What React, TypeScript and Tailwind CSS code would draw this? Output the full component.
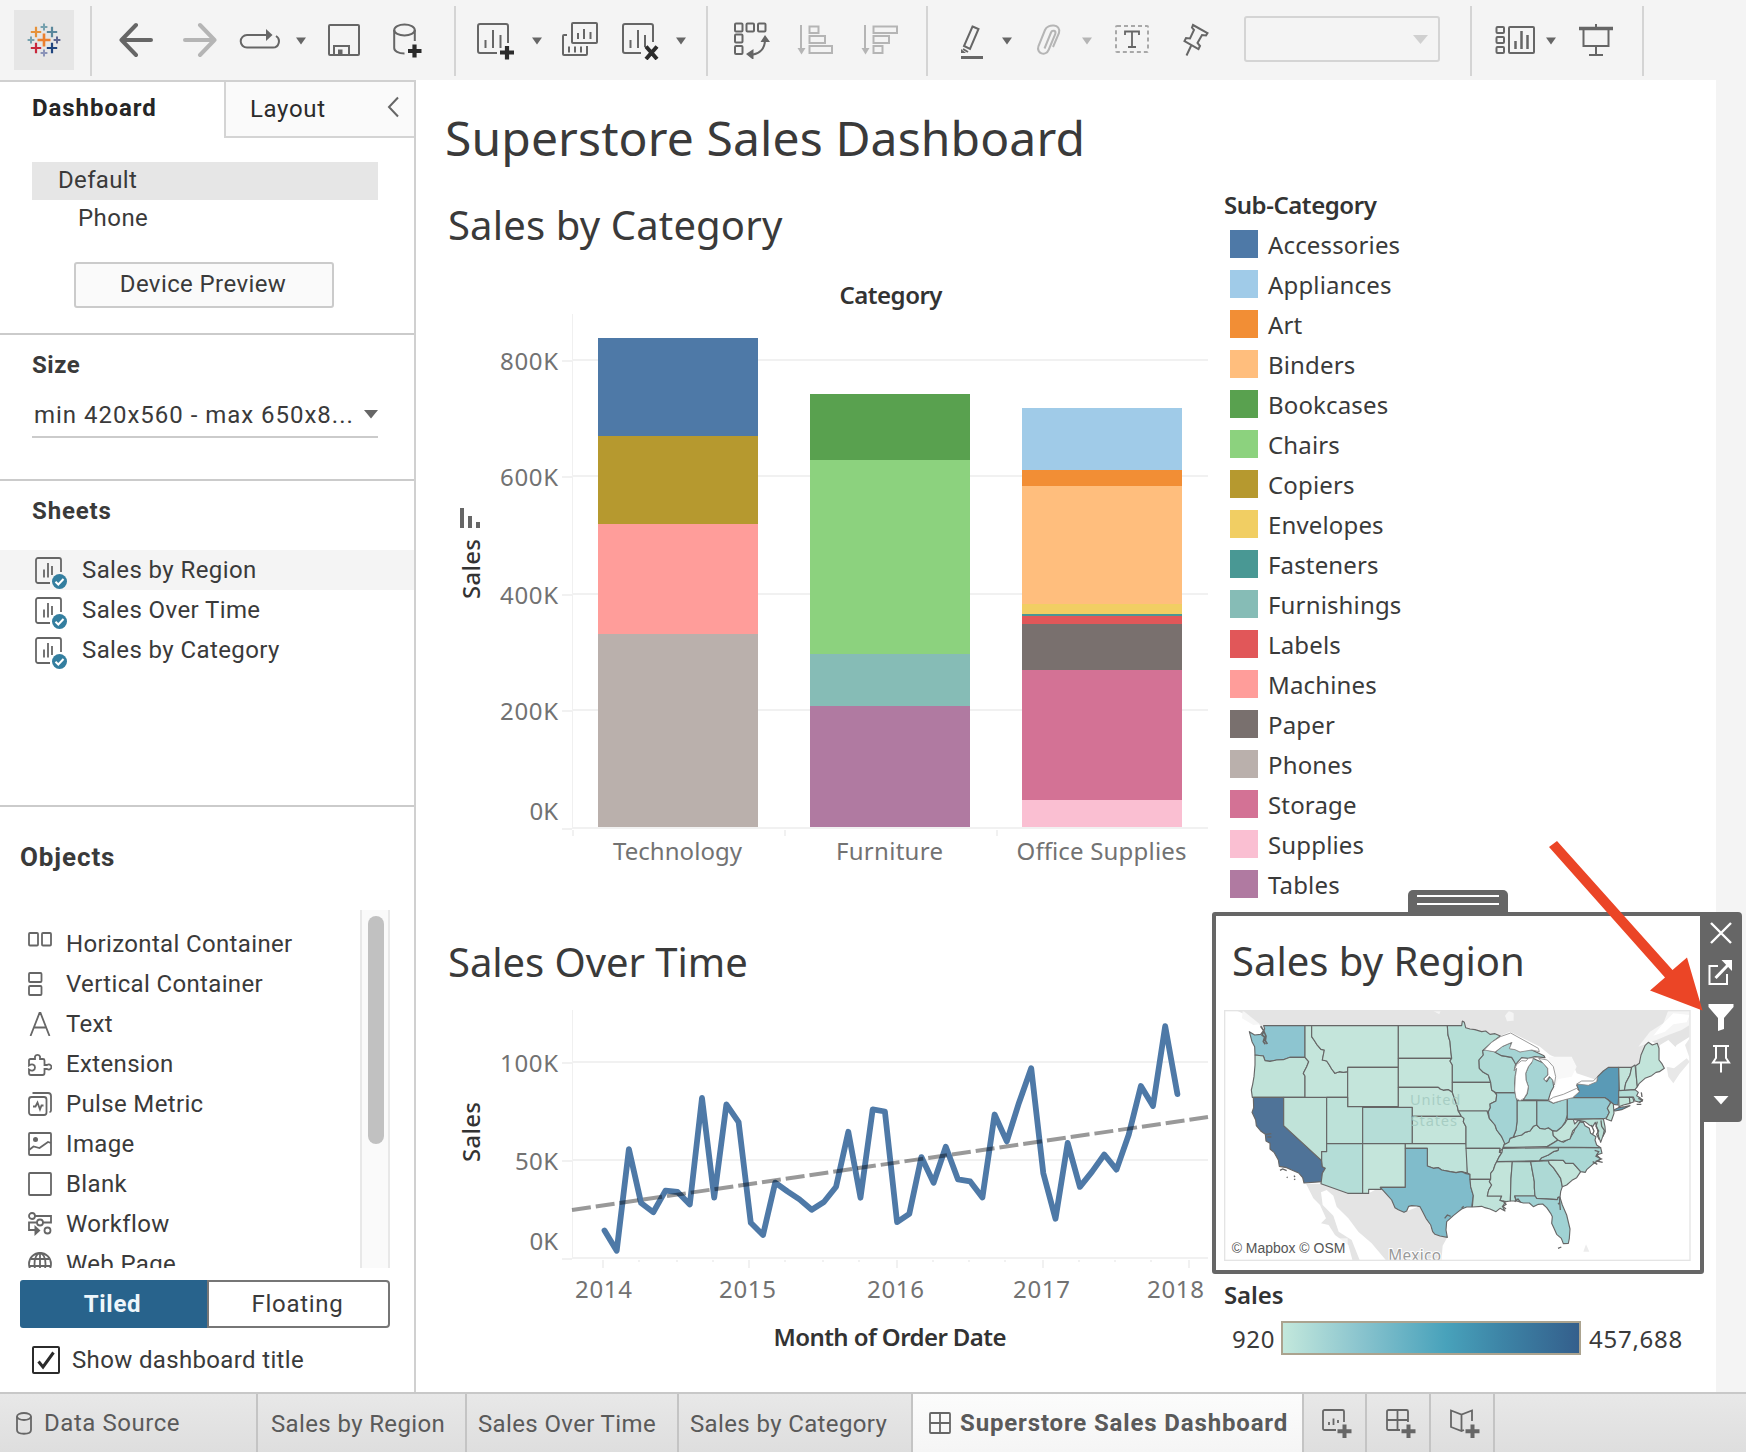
import React from "react";

/* ---------- data ---------- */

const SUBCATEGORIES: [string, string][] = [
  ["Accessories", "#4e79a7"],
  ["Appliances", "#a0cbe8"],
  ["Art", "#f28e35"],
  ["Binders", "#ffbe7d"],
  ["Bookcases", "#59a14f"],
  ["Chairs", "#8cd27e"],
  ["Copiers", "#b6992f"],
  ["Envelopes", "#f1ce63"],
  ["Fasteners", "#499894"],
  ["Furnishings", "#86bcb6"],
  ["Labels", "#e15759"],
  ["Machines", "#ff9d9a"],
  ["Paper", "#79706e"],
  ["Phones", "#bab0ac"],
  ["Storage", "#d37295"],
  ["Supplies", "#fabfd2"],
  ["Tables", "#b07aa1"],
];

type Segment = { y: number; color: string };

const BARS: { x: number; segments: Segment[] }[] = [
  {
    x: 598,
    segments: [
      { y: 338, color: "#4e79a7" },
      { y: 436, color: "#b6992f" },
      { y: 524, color: "#ff9d9a" },
      { y: 634, color: "#bab0ac" },
    ],
  },
  {
    x: 810,
    segments: [
      { y: 394, color: "#59a14f" },
      { y: 460, color: "#8cd27e" },
      { y: 654, color: "#86bcb6" },
      { y: 706, color: "#b07aa1" },
    ],
  },
  {
    x: 1022,
    segments: [
      { y: 408, color: "#a0cbe8" },
      { y: 470, color: "#f28e35" },
      { y: 486, color: "#ffbe7d" },
      { y: 604, color: "#f1ce63" },
      { y: 614, color: "#499894" },
      { y: 616, color: "#e15759" },
      { y: 624, color: "#79706e" },
      { y: 670, color: "#d37295" },
      { y: 800, color: "#fabfd2" },
    ],
  },
];

/* Monthly sales in thousands, January 2014 to December 2017. */
const MONTHLY = [
  14.2, 4.0, 55.7, 28.3, 23.6, 34.6, 33.9, 27.5, 81.8, 31.0, 78.6, 69.5,
  18.2, 12.0, 38.7, 34.2, 30.1, 24.8, 28.8, 36.6, 64.6, 31.0, 76.0, 74.9,
  18.5, 22.8, 51.7, 38.6, 57.0, 40.3, 39.3, 31.1, 73.4, 59.7, 79.4, 97.0,
  43.5, 20.3, 58.9, 36.5, 44.3, 53.0, 45.3, 63.1, 87.9, 77.8, 118.4, 83.8,
];

const linePoints = MONTHLY.map(
  (v, i) => `${(604.5 + i * 12.19).toFixed(1)},${(1258.5 - v * 1.962).toFixed(1)}`,
).join(" ");

const STATES: [string, string][] = [
  ["#8dc5d0", "88,80 104,90 122,88 134,72 131,62 255,62 255,157 210,157 190,164 170,165 150,169 135,167 130,153 105,150 104,125 96,110 92,95"],
  ["#c0e3d9", "105,150 130,153 135,167 150,169 170,165 190,164 210,157 255,157 266,170 260,185 250,205 255,213 255,277 97,277 94,255 98,238 102,215 105,180"],
  ["#4f7398", "100,277 191,277 191,362 305,467 307,485 316,490 307,505 306,530 252,534 248,518 236,504 215,495 200,488 178,484 175,465 162,442 150,432 150,415 138,408 136,388 122,378 109,362 107,345 96,322 101,308"],
  ["#c0e3d9", "191,277 320,277 320,440 305,440 305,467 191,362"],
  ["#c4e5db", "255,62 275,62 275,95 284,108 290,118 303,133 313,135 307,165 320,168 328,180 335,192 345,205 358,200 370,202 383,200 383,277 255,277 255,213 250,205 260,185 266,170 255,157"],
  ["#c4e5db", "275,62 535,62 535,187 383,187 383,200 370,202 358,200 345,205 335,192 328,180 320,168 307,165 313,135 303,133 290,118 284,108 275,95"],
  ["#c4e5db", "383,187 535,187 535,305 383,305"],
  ["#bde2d9", "320,277 383,277 383,305 428,305 428,416 320,416"],
  ["#b5ddd7", "428,307 577,307 577,416 428,416"],
  ["#b4ddd7", "320,416 428,416 428,565 383,565 303,536 307,505 316,490 307,485 305,467 305,440 320,440"],
  ["#c4e5db", "428,416 556,416 556,547 481,547 484,553 446,553 446,565 428,565"],
  ["#c4e5db", "535,62 682,62 684,90 690,110 692,135 695,160 535,160"],
  ["#c4e5db", "535,160 695,160 690,168 697,180 697,232 697,262 685,254 670,256 660,252 655,247 535,247"],
  ["#c4e5db", "535,247 655,247 660,252 670,256 685,254 697,262 705,285 712,305 715,318 724,334 577,334 577,307 535,307"],
  ["#c4e5db", "577,334 724,334 732,340 730,350 738,365 738,416 577,416"],
  ["#bfe3da", "556,416 738,416 742,450 742,504 725,500 708,503 690,500 665,495 655,488 640,490 622,483 622,430 556,430"],
  ["#80bccb", "556,430 622,430 622,483 640,490 655,488 665,495 690,500 708,503 725,500 735,505 750,508 752,545 760,572 755,606 740,606 725,612 715,620 700,632 680,650 678,675 682,697 660,693 645,688 638,680 632,660 618,640 608,620 600,605 590,603 575,602 566,604 560,618 552,622 535,614 525,608 515,585 500,568 481,547 556,547"],
  ["#b6dfd7", "682,62 725,62 727,48 733,52 737,68 750,72 765,74 785,80 797,78 810,88 825,86 841,93 815,112 788,137 790,150 777,165 778,190 790,202 805,210 812,232 697,232 697,180 690,168 695,160 692,135 690,110 684,90"],
  ["#c2e4da", "697,232 812,232 815,255 824,262 830,270 828,288 810,297 811,308 805,320 801,318 715,318 712,305 705,285 697,262"],
  ["#b9e0d8", "715,318 801,318 808,340 825,360 830,375 845,395 855,412 848,430 838,442 840,430 738,430 738,365 730,350 732,340 724,334"],
  ["#c0e3da", "738,430 840,430 838,442 846,442 836,458 830,470 825,480 820,495 812,505 812,523 750,523 750,508 742,504"],
  ["#c0e3da", "750,523 812,523 808,530 815,540 806,555 802,573 845,573 840,586 855,592 848,605 855,618 840,610 828,620 810,612 795,608 785,604 757,606 760,572 752,545"],
  ["#c2e4da", "830,470 877,470 873,520 871,588 858,590 840,586 845,573 802,573 806,555 815,540 808,530 812,523 812,505 820,495 825,480"],
  ["#b6dfd7", "877,470 932,470 943,530 943,548 945,573 884,573 888,588 871,588 873,520"],
  ["#add9d5", "932,470 985,467 988,476 1000,488 1012,505 1022,520 1027,545 1022,560 1020,577 1014,577 1012,584 950,580 945,573 943,548 943,530"],
  ["#a0d2d4", "884,573 945,573 950,580 1012,584 1014,577 1020,577 1027,600 1040,630 1050,672 1048,700 1045,715 1030,716 1024,700 1010,688 1002,670 995,655 997,635 992,625 980,608 968,597 955,598 940,605 928,594 910,594 890,588"],
  ["#c2e4da", "985,467 995,465 1030,466 1037,475 1060,475 1082,500 1070,518 1056,526 1040,540 1027,545 1022,520 1012,505 1000,488 988,476"],
  ["#aad8d5", "1016,428 1142,428 1146,445 1130,450 1142,462 1118,478 1100,494 1096,502 1082,500 1060,475 1037,475 1030,466 995,465 958,467 965,458 985,450 1000,440 1014,436"],
  ["#b5ded7", "848,430 1016,428 1014,436 1000,440 985,450 965,458 958,467 830,470 836,458 846,442"],
  ["#b9e0d8", "850,427 855,412 866,412 870,400 885,396 890,392 905,390 915,382 930,378 940,364 950,360 960,370 975,372 985,368 998,377 1000,392 1014,405 980,425 880,427"],
  ["#a8d6d4", "1014,405 1000,414 980,426 1142,428 1130,420 1125,405 1128,395 1112,385 1108,370 1095,362 1090,352 1080,350 1066,368 1062,380 1050,400 1030,412"],
  ["#c2e4da", "998,377 1010,378 1020,370 1035,355 1042,343 1060,343 1064,357 1075,346 1090,345 1090,352 1080,350 1070,366 1058,378 1050,402 1025,410 1014,405 1000,392"],
  ["#a5d4d4", "950,287 985,287 1000,295 1020,288 1042,280 1042,330 1036,350 1025,366 1010,378 998,377 985,368 975,372 960,370 950,360"],
  ["#b0dbd6", "891,287 950,287 950,360 940,364 930,378 915,382 905,390 880,396 888,375 891,350"],
  ["#a3d3d4", "828,263 885,263 891,287 891,350 888,375 880,396 870,400 866,412 855,418 845,395 830,375 825,360 808,340 805,320 811,308 810,297 828,288 830,270"],
  ["#b0dbd6", "788,137 800,132 812,138 825,140 845,152 875,157 880,165 888,172 883,195 892,182 886,210 884,235 885,263 828,263 815,255 812,232 805,210 790,202 778,190 777,165 790,150"],
  ["#a5d4d4", "825,142 845,125 875,112 870,130 885,133 900,140 920,133 935,135 950,142 972,152 975,158 945,155 925,160 905,158 892,172 888,180 880,165 875,157 845,152"],
  ["#a5d4d4", "936,158 950,165 972,175 983,190 984,210 972,222 980,230 990,215 998,225 1001,245 992,262 985,285 910,284 922,265 925,245 918,225 917,205 925,185 935,172"],
  ["#5a9ab6", "1058,278 1078,260 1070,240 1085,234 1105,239 1130,228 1133,215 1150,198 1165,187 1196,187 1198,230 1197,265 1194,300 1180,298 1165,285 1155,278"],
  ["#5a9ab6", "1180,316 1195,308 1215,305 1230,302 1205,314 1185,318"],
  ["#94c9d1", "1042,278 1155,278 1165,285 1172,293 1162,310 1168,322 1160,338 1150,342 1042,342"],
  ["#bbe1d8", "1165,285 1180,297 1182,325 1174,348 1158,342 1168,322 1162,310 1172,293"],
  ["#bbe1d8", "1062,343 1150,341 1155,365 1156,380 1148,395 1142,412 1136,395 1132,372 1126,352 1118,365 1108,360 1095,350 1075,346"],
  ["#c2e4da", "1196,187 1235,187 1230,210 1217,235 1213,257 1198,257"],
  ["#c2e4da", "1235,187 1245,180 1249,215 1252,245 1245,254 1213,257 1217,235 1230,210"],
  ["#c2e4da", "1247,182 1258,175 1263,150 1275,122 1285,112 1297,120 1312,115 1317,130 1317,165 1325,175 1333,190 1318,200 1308,202 1295,212 1275,220 1258,235 1252,245 1249,215"],
  ["#b3ddd6", "1196,257 1245,254 1255,262 1250,272 1262,280 1268,285 1260,292 1245,288 1240,276 1196,277"],
  ["#c2e4da", "1196,277 1228,277 1230,295 1210,300 1197,305"],
  ["#c2e4da", "1228,277 1238,277 1242,290 1230,295"],
];

const CANADA =
  "M48,16 L78,30 L88,48 L118,58 L124,70 L135,62 L725,62 L727,48 L737,68 L785,80 L841,93 L870,80 L960,125 L990,150 L1060,180 L1070,205 L1130,225 L1165,187 L1235,187 L1258,175 L1275,122 L1290,105 L1317,122 L1320,165 L1345,160 L1370,120 L1409,95 L1409,16 Z";
const MEXICO =
  "M258,536 L303,536 L383,565 L446,565 L481,547 L515,585 L552,622 L600,603 L638,680 L682,697 L668,722 L664,768 L500,768 L455,715 L415,680 L385,640 L350,605 L340,572 L320,555 L303,562 L308,600 L340,632 L356,680 L395,705 L420,768 L398,768 L385,720 L345,690 L326,660 L303,655 L318,640 L300,600 L280,580 Z";

/* ---------- small pieces ---------- */

function Caret({ className }: { className: string }) {
  return (
    <svg width="12" height="8" viewBox="0 0 12 8" className={className}>
      <path d="M1 .5h10L6 7.5z" fill="currentColor" />
    </svg>
  );
}

function Divider({ className }: { className: string }) {
  return <div className={`h-[70px] w-[2px] shrink-0 bg-[#d4d4d4] ${className}`} />;
}

function Ico({ w, h, className, children }: { w: number; h: number; className?: string; children: React.ReactNode }) {
  return (
    <svg
      width={w}
      height={h}
      viewBox={`0 0 ${w} ${h}`}
      fill="none"
      stroke="currentColor"
      strokeWidth="2"
      className={`shrink-0 ${className ?? ""}`}
    >
      {children}
    </svg>
  );
}

function Logo() {
  const marks: [number, number, number, number, string][] = [
    [30, 30, 6.5, 2.6, "#eb7f2d"],
    [22, 22, 5.2, 2.2, "#e6923a"],
    [38, 22, 5.2, 2.2, "#5a879b"],
    [22, 38, 5.2, 2.2, "#c8283c"],
    [38, 38, 5.2, 2.2, "#1f447e"],
    [30, 17, 3.4, 2, "#76a1ae"],
    [17, 30, 3.4, 2, "#76a1ae"],
    [43, 30, 3.4, 2, "#5b6591"],
    [30, 43, 3.4, 2, "#8a93b8"],
  ];
  return (
    <svg width="60" height="60" viewBox="0 0 60 60" fill="none">
      {marks.map(([x, y, r, w, c], i) => (
        <path key={i} d={`M${x - r} ${y}h${2 * r}M${x} ${y - r}v${2 * r}`} stroke={c} strokeWidth={w} />
      ))}
    </svg>
  );
}

/* ---------- toolbar ---------- */

function Toolbar() {
  return (
    <header className="flex h-[80px] items-center bg-[#f4f4f4] text-[#666]">
      <div className="ml-[14px] size-[60px] shrink-0 bg-[#e6e6e6]">
        <Logo />
      </div>
      <Divider className="ml-4 mt-[2px]" />
      <Ico w={34} h={36} className="ml-[27px]">
        <path d="M17 3 2.500 18 17 33M2.500 18H32" strokeWidth="4" strokeLinecap="round" strokeLinejoin="round" />
      </Ico>
      <Ico w={34} h={36} className="ml-[30px] text-[#b5b5b5]">
        <path d="M17 3 31.500 18 17 33M31.500 18H2" strokeWidth="4" strokeLinecap="round" strokeLinejoin="round" />
      </Ico>
      <Ico w={42} h={22} className="-mt-[2px] ml-[22px]">
        <path d="M31 7H8a6.300 6.300 0 0 0 0 12.600h26a6.300 6.300 0 0 0 3-11.600" />
        <path d="M27 1v12l6.500-6z" fill="currentColor" stroke="none" />
      </Ico>
      <Caret className="ml-[14px] mt-[2px]" />
      <Ico w={32} h={32} className="ml-[21px]">
        <rect x="1" y="1" width="30" height="30" rx="1" />
        <path d="M6 31v-9h15v9" />
        <path d="M10 25.500h4.500V31H10z" fill="currentColor" stroke="none" />
      </Ico>
      <Ico w={30} h={36} className="ml-[33px] mt-[2px]">
        <ellipse cx="11.500" cy="7" rx="10.300" ry="5.500" />
        <path d="M1.200 7v18c0 3 4 5.500 10.300 5.500M21.800 7v11" />
        <path d="M21.500 21.500v13M15 28h13.500" stroke="#2b2b2b" strokeWidth="4.200" />
      </Ico>
      <Divider className="ml-[31px] mt-[2px]" />

      <Ico w={38} h={38} className="ml-[20px] mt-[2px]">
        <path d="M21 31H4a2 2 0 0 1-2-2V4a2 2 0 0 1 2-2h26a2 2 0 0 1 2 2v17M9.500 18v8M17 8v18M24.500 13v13" />
        <path d="M31 24v13.500M24 30.500h14" stroke="#2b2b2b" strokeWidth="4.200" />
      </Ico>
      <Caret className="ml-[17px] mt-[2px]" />
      <Ico w={38} h={36} className="-mt-[2px] ml-[18px]">
        <rect x="11" y="2" width="25" height="20" rx="1" />
        <path d="M17 12v6M23 8v10M29.500 11v7M6 14H3a1 1 0 0 0-1 1v18a1 1 0 0 0 1 1h22a1 1 0 0 0 1-1v-8M8 25.500v6M14 25.500v6M20 25.500v6" />
      </Ico>
      <Ico w={38} h={38} className="ml-[23px] mt-[2px]">
        <path d="M19 31H3a2 2 0 0 1-2-2V4a2 2 0 0 1 2-2h26a2 2 0 0 1 2 2v16M8.500 18v8M16 8v18M23 13v12" />
        <path d="m24 24.500 11 12.500M35 24.500 24 37" stroke="#2b2b2b" strokeWidth="4" />
      </Ico>
      <Caret className="ml-[15px] mt-[2px]" />
      <Divider className="ml-[19px] mt-[2px]" />

      <Ico w={38} h={38} className="ml-[25px]">
        <rect x="2" y="2.500" width="7.500" height="8" rx="1" />
        <rect x="13.500" y="2.500" width="7.500" height="8" rx="1" />
        <rect x="25" y="2.500" width="7.500" height="8" rx="1" />
        <rect x="2" y="13.500" width="7.500" height="8" rx="1" />
        <rect x="2" y="25" width="7.500" height="8" rx="1" />
        <path d="M32 19c0 9-6 14-12 14.500" />
        <path d="M27.500 21 32 14l5 7zM20.500 28v11L13 33z" fill="currentColor" stroke="none" />
      </Ico>
      <Ico w={37} h={32} className="ml-[26px] text-[#b5b5b5]">
        <path d="M4 1v25" />
        <path d="M.5 24h8L4.500 30.500z" fill="currentColor" stroke="none" />
        <rect x="12.500" y="2.500" width="9" height="6.500" />
        <rect x="12.500" y="12" width="15.500" height="7" />
        <rect x="12.500" y="22" width="22.500" height="7" />
      </Ico>
      <Ico w={38} h={32} className="ml-[27px] text-[#b5b5b5]">
        <path d="M4 1v25" />
        <path d="M.5 24h8L4.500 30.500z" fill="currentColor" stroke="none" />
        <rect x="12.500" y="2.500" width="23.500" height="6.500" />
        <rect x="12.500" y="12" width="15.500" height="7" />
        <rect x="12.500" y="22" width="9" height="7" />
      </Ico>
      <Divider className="ml-[27px] mt-[2px]" />

      <Ico w={24} h={36} className="ml-[32px] mt-[2px]">
        <path d="m12.500 3.500 6 2.500-8.500 20-6-3zM3 26l5 3" />
        <path d="M1 30v-4l5 4z" fill="currentColor" stroke="none" />
        <path d="M1 34.500h22" strokeWidth="3" />
      </Ico>
      <Caret className="ml-[17px] mt-[2px]" />
      <Ico w={26} h={32} className="ml-[23px] text-[#b5b5b5]">
        <path d="m8.500 24.500 6.500-16c1.300-3 5.300-2 4.300 1.500l-6.500 15.500c-3 7.500-13 4-10.300-3.500l6.500-16C11.500-.5 25.500-.5 23 9l-6 14" />
      </Ico>
      <Caret className="ml-[19px] mt-[2px] text-[#b5b5b5]" />
      <Ico w={36} h={30} className="-mt-[2px] ml-[21px]">
        <rect x="2" y="2" width="32" height="26" rx="1" stroke="#a8a8a8" strokeDasharray="4 3" />
        <path d="M11 11V7.500h14V11M18 7.500V23M14 23h8" strokeWidth="1.800" />
      </Ico>
      <Ico w={28} h={34} className="ml-[32px]">
        <path d="m11 2 14.500 8-1.500 2.500-4-.5-4.500 8 2.500 3-1.500 3L2.500 18l1.500-3 4 .5 4-8.500-2-2.500zM9 23 4.500 32.500" />
      </Ico>
      <div className="-mt-[2px] ml-[34px] flex h-[46px] w-[196px] shrink-0 items-center justify-end rounded-[3px] border-2 border-[#d4d4d4] pr-[10px]">
        <svg width="15" height="9" viewBox="0 0 15 9">
          <path d="M0 0h15L7.500 9z" fill="#d0d0d0" />
        </svg>
      </div>
      <Divider className="ml-[30px] mt-[2px]" />
      <Ico w={40} h={30} className="ml-[23px]">
        <rect x="1.500" y="2" width="7.500" height="6" rx="1" />
        <rect x="1.500" y="12" width="7.500" height="6" rx="1" />
        <rect x="1.500" y="22" width="7.500" height="6" rx="1" />
        <rect x="14" y="2" width="25" height="26" rx="1" />
        <path d="M20.500 16v8M26.500 6v18M32.500 10v14" strokeWidth="2.500" />
      </Ico>
      <Caret className="ml-[10px] mt-[2px]" />
      <Ico w={34} h={34} className="ml-[22px]">
        <path d="M0 5.500h34" strokeWidth="3.600" />
        <path d="M17 1v4M4.500 6v17h25V6M17 23v9M10 32h14" />
      </Ico>
      <Divider className="ml-[29px] mt-[2px]" />
    </header>
  );
}

/* ---------- sidebar ---------- */

function SheetIcon() {
  return (
    <svg width="34" height="33" viewBox="0 0 34 33" fill="none" stroke="#666" strokeWidth="1.800" className="self-end">
      <path d="M15 26H3a2 2 0 0 1-2-2V3a2 2 0 0 1 2-2h21a2 2 0 0 1 2 2v12M9 12.500v8M13 6v14.500M17 9v9" />
      <circle cx="24.500" cy="24.500" r="7.500" fill="#337e9f" stroke="none" />
      <path d="m20.500 24.800 2.800 2.700 5.200-5.500" stroke="#fff" strokeWidth="2" />
    </svg>
  );
}

const OBJECTS: [string, React.ReactNode][] = [
  ["Horizontal Container", <><rect x="1" y="1" width="9" height="12.500" rx="1" /><rect x="14" y="1" width="9" height="12.500" rx="1" /></>],
  ["Vertical Container", <><rect x="1" y="1" width="12.500" height="9" rx="1" /><rect x="1" y="14" width="12.500" height="9" rx="1" /></>],
  ["Text", <path d="m2.500 24 9-23h1l9 23M6 15.500h12" />],
  ["Extension", <path d="M1 11V8.500Q1 7 2.500 7H7V4.500a2.800 2.800 0 0 1 5 0V7h3q1.500 0 1.500 1.500V13h2.500a2.800 2.500 0 1 1 0 4h-2.500v4q0 2-2 2H3q-2 0-2-2v-3.500c3 2 6 1 6-2s-3-4-6-2z" />],
  ["Pulse Metric", <><rect x="1" y="5" width="17.500" height="18" rx="2.500" /><path d="M4.500 1H20q3 0 3 3v14.500q0 1.500-1.500 1.500M5 14.500h2.500l2-4 2.500 7 1.500-4h2" /></>],
  ["Image", <><rect x="1" y="1" width="22" height="22" rx="1" /><circle cx="7.500" cy="7.500" r="2.500" fill="#666" stroke="none" /><path d="m1 18 4.500-3.500 6 1.500 8.500-6 3 1" /></>],
  ["Blank", <rect x="1" y="1" width="22" height="22" rx="1" />],
  ["Workflow", <><circle cx="4" cy="4" r="3" /><path d="M7 4h16v6.500h-8.500" /><circle cx="12" cy="10.500" r="3" /><path d="M9 10.500H1V18h6" /><path d="m6.500 13 6 5.500-6 5.500z" fill="#666" stroke="none" /><circle cx="19.500" cy="18.500" r="3" /></>],
  ["Web Page", <><circle cx="12" cy="12" r="11" /><ellipse cx="12" cy="12" rx="5.500" ry="11" /><path d="M12 1v22M2.500 7h19M1 14h22" /></>],
];

function Sidebar() {
  return (
    <aside className="flex w-[416px] shrink-0 flex-col border-r-2 border-t-2 border-[#d0d0d0] font-[Roboto,sans-serif] text-[24px] font-normal tracking-[0.35px] text-[#3a3a3a]">
      <div className="flex h-[56px]">
        <div className="w-[224px] pl-[32px] font-bold leading-[53px] tracking-[0.95px] text-[#262626]">Dashboard</div>
        <div className="flex flex-1 items-center justify-between border-b-2 border-l-2 border-[#d4d4d4] bg-[#fafafa] pl-[24px] pr-[14px] text-[#2b2b2b]">
          <span className="tracking-[0.65px]">Layout</span>
          <svg width="14" height="22" viewBox="0 0 14 22" className="-mt-[4px]" fill="none" stroke="#666" strokeWidth="2">
            <path d="M12 1.500 3 11l9 9.500" />
          </svg>
        </div>
      </div>

      <section className="flex h-[197px] flex-col items-start border-b-2 border-[#cbcbcb] pt-[24px]">
        <div className="ml-[32px] h-[38px] w-[346px] bg-[#e6e6e6] pl-[26px] leading-[36px]">Default</div>
        <div className="h-[36px] pl-[78px] leading-[36px] tracking-[0.45px]">Phone</div>
        <button className="ml-[74px] mt-[26px] h-[46px] w-[260px] rounded-[3px] border-2 border-[#cbcbcb] bg-[#fafafa] pb-[2px] pr-[2px] leading-[40px] tracking-[0.4px]">
          Device Preview
        </button>
      </section>

      <section className="h-[146px] border-b-2 border-[#cbcbcb] pl-[32px]">
        <h3 className="h-[59px] font-bold leading-[60px] tracking-[0.5px]">Size</h3>
        <div className="flex h-[44px] w-[346px] items-center justify-between border-b-2 border-[#cbcbcb] pl-[2px]">
          <span className="whitespace-nowrap tracking-[0.98px]">min 420x560 - max 650x8...</span>
          <svg width="14" height="9" viewBox="0 0 14 9" className="-mt-[2px]">
            <path d="M0 0h14L7 8.500z" fill="#666" />
          </svg>
        </div>
      </section>

      <section className="h-[326px] border-b-2 border-[#cbcbcb]">
        <h3 className="h-[69px] pl-[32px] font-bold leading-[60px] tracking-[0.85px]">Sheets</h3>
        {["Sales by Region", "Sales Over Time", "Sales by Category"].map((s, i) => (
          <div key={s} className={`flex h-[40px] items-center gap-[13px] pl-[35px] ${i === 0 ? "bg-[#f4f4f4]" : ""}`}>
            <SheetIcon />
            <span className="leading-[40px] tracking-[0.4px]">{s}</span>
          </div>
        ))}
      </section>

      <section className="flex flex-1 flex-col pl-[20px]">
        <h3 className="h-[103px] text-[26px] font-bold leading-[101px] tracking-[0.9px]">Objects</h3>
        <div className="flex h-[358px] w-[370px] justify-between overflow-hidden">
          <ul className="pl-[8px] pt-[14px]">
            {OBJECTS.map(([name, icon]) => (
              <li key={name} className="flex h-[40px] items-center gap-[14px]">
                <svg width="24" height="24" viewBox="0 0 24 24" fill="none" stroke="#666" strokeWidth="1.800">
                  {icon}
                </svg>
                <span className="leading-[40px]">{name}</span>
              </li>
            ))}
          </ul>
          <div className="h-full w-[30px] border-x-2 border-[#e8e8e8] bg-[#fafafa] pl-[6px] pt-[6px]">
            <div className="h-[228px] w-4 rounded-full bg-[#c1c1c1]" />
          </div>
        </div>
        <div className="mt-3 flex h-[48px] w-[370px] text-center leading-[46px]">
          <div className="w-[187px] rounded-l-[3px] bg-[#28638c] pr-[2px] font-bold leading-[48px] tracking-[0.7px] text-[#eef6fb]">Tiled</div>
          <div className="flex-1 rounded-r-[4px] border-2 border-[#767676] pr-[2px] leading-[44px] tracking-[0.7px]">Floating</div>
        </div>
        <div className="mt-[18px] flex items-center gap-[12px] pl-[12px]">
          <svg width="28" height="28" viewBox="0 0 28 28" fill="none" stroke="#2b2b2b">
            <rect x="1" y="1" width="26" height="26" rx="1" strokeWidth="2" />
            <path d="m6.500 15.500 4.500 5.500L21.500 6.500" strokeWidth="3" />
          </svg>
          <span className="leading-[28px]">Show dashboard title</span>
        </div>
      </section>
    </aside>
  );
}

/* ---------- charts ---------- */

const LABEL = "fill-[#727272] text-[24px] font-normal";

function CategoryChart() {
  const yTicks: [number, number, string, number][] = [
    [359, 370, "800K", 58],
    [475, 486, "600K", 58],
    [593, 604, "400K", 58],
    [709, 720, "200K", 58],
    [827, 820, "0K", 28.5],
  ];
  return (
    <svg width="796" height="677" viewBox="416 254 796 677" className="block">
      <text x="891" y="304" textAnchor="middle" textLength="103" className="fill-[#333] text-[24px] font-semibold">Category</text>
      <path d="M572.500 314v514" stroke="#f0f0f0" />
      {yTicks.map(([y, base, label, len]) => (
        <g key={label}>
          <rect x="572" y={y} width="636" height="2" fill="#f1f1f1" />
          <rect x="562" y={y + 1} width="10" height="2" fill="#f1f1f1" />
          <text x="558" y={base} textAnchor="end" textLength={len} className={LABEL}>{label}</text>
        </g>
      ))}
      {[572, 784, 996].map((x) => (
        <rect key={x} x={x} y="830" width="2" height="6" fill="#f1f1f1" />
      ))}
      {BARS.map((bar) =>
        bar.segments.map((s, i) => (
          <rect
            key={s.y}
            x={bar.x}
            y={s.y}
            width="160"
            height={(bar.segments[i + 1]?.y ?? 827) - s.y}
            fill={s.color}
          />
        )),
      )}
      <text x="677.500" y="860" textAnchor="middle" textLength="129" className={LABEL}>Technology</text>
      <text x="889.500" y="860" textAnchor="middle" textLength="107" className={LABEL}>Furniture</text>
      <text x="1101.500" y="860" textAnchor="middle" textLength="170" className={LABEL}>Office Supplies</text>
      <text transform="translate(480 569) rotate(-90)" textAnchor="middle" textLength="60" className="fill-[#333] text-[24px] font-medium">Sales</text>
      <path d="M462 508v20M470 516v12M478 522v6" stroke="#666" strokeWidth="4" />
    </svg>
  );
}

function TimeChart() {
  const yTicks: [number, number, string, number][] = [
    [1061, 1072, "100K", 58],
    [1159, 1170, "50K", 43],
    [1257, 1250, "0K", 28.5],
  ];
  const years: [number, number, string][] = [
    [603, 603.5, "2014"],
    [749, 747.5, "2015"],
    [897, 895.5, "2016"],
    [1043, 1041.5, "2017"],
    [1189, 1175.5, "2018"],
  ];
  return (
    <svg width="796" height="401" viewBox="416 991 796 401" className="block">
      <path d="M572.500 1010v248" stroke="#f0f0f0" />
      {yTicks.map(([y, base, label, len]) => (
        <g key={label}>
          <rect x="572" y={y} width="636" height="2" fill="#f1f1f1" />
          <rect x="562" y={y + 1} width="10" height="2" fill="#f1f1f1" />
          <text x="558" y={base} textAnchor="end" textLength={len} className={LABEL}>{label}</text>
        </g>
      ))}
      {years.map(([x, tx, label]) => (
        <g key={label}>
          <rect x={x - 1} y="1260" width="2" height="8" fill="#f1f1f1" />
          <text x={tx} y="1298" textAnchor="middle" textLength="57" className={LABEL}>{label}</text>
        </g>
      ))}
      {[639, 677, 713, 785, 823, 859, 933, 969, 1005, 1079, 1115, 1151].map((x) => (
        <rect key={x} x={x - 1} y="1260" width="2" height="2" fill="#f1f1f1" />
      ))}
      <polyline points={linePoints} fill="none" stroke="#4e79a7" strokeWidth="5.800" strokeLinecap="round" strokeLinejoin="round" />
      <path d="M572 1210 1208 1117" fill="none" stroke="#000" strokeOpacity="0.4" strokeWidth="4" strokeDasharray="19 5" />
      <text x="890" y="1346" textAnchor="middle" textLength="233" className="fill-[#333] text-[24px] font-semibold">Month of Order Date</text>
      <text transform="translate(480 1132) rotate(-90)" textAnchor="middle" textLength="60" className="fill-[#333] text-[24px] font-medium">Sales</text>
    </svg>
  );
}

function RegionMap() {
  return (
    <svg width="480" height="260" viewBox="0 0 1440 780" className="ml-1 block">
      <defs>
        <clipPath id="frame">
          <rect x="15" y="17" width="1394" height="748" />
        </clipPath>
      </defs>
      <g clipPath="url(#frame)">
        <path d={CANADA} fill="#e4e4e4" />
        <path d="M68,16 L120,58 L100,60 L66,40Z" fill="#f6f6f6" />
        <path d="M1255,125 L1290,80 L1330,55 L1345,16 L1409,16 L1409,60 L1385,75 L1345,90 L1310,105 L1285,112 L1270,120Z" fill="#f5f5f5" />
        <path d="M1330,55 L1360,25 L1409,30 L1400,52 L1360,58 L1335,80 L1300,92 Z" fill="#fff" />
        <path d="M1320,120 L1345,105 L1370,130 L1409,110 L1409,175 L1360,180 L1333,190 L1317,165Z" fill="#fff" />
        <path d="M1340,185 L1362,190 L1400,160 L1409,170 L1380,205 L1360,235 L1345,215Z" fill="#e8e8e8" />
        <path d="M1395,120l14-20v60z" fill="#e8e8e8" />
        <path d={MEXICO} fill="#e4e4e4" />
        <path d="M855,32l12-15 14 8v22l-20 2zM640,18l18 10 4-11z" fill="#f4f4f4" />
        <path d="M1090,740l8-22 10 22z" fill="#ececec" />
        <path d="M985,155 L1055,155 L1070,185 L1055,215 L1015,222 L1000,260 L990,225 L996,190Z" fill="#f8f8f8" />
        <text x="505" y="769" fontSize="46" letterSpacing="1" fill="#999" stroke="#fff" strokeWidth="6" paintOrder="stroke">Mexico</text>
        <g stroke="#666" strokeWidth="3.400" strokeLinejoin="round">
          {STATES.map(([fill, pts], i) => (
            <polygon key={i} points={pts} fill={fill} />
          ))}
        </g>
        <g fill="#fff" stroke="#888" strokeWidth="2.500" strokeLinejoin="round">
          <path d="M793,135 L815,112 L841,95 L872,84 L955,130 L958,140 L935,135 L900,141 L885,134 L868,131 L876,112 L848,124 L825,141Z" />
          <path d="M882,197 L890,178 L905,167 L918,168 L925,160 L940,158 L938,168 L925,185 L917,205 L918,225 L925,245 L921,265 L912,280 L900,287 L888,280 L884,255 L886,215 L890,190Z" />
          <path d="M956,160 L982,165 L1000,185 L1007,215 L1003,240 L998,225 L988,214 L978,228 L972,222 L984,210 L983,190Z" />
          <path d="M986,286 L1000,277 L1030,268 L1070,250 L1078,260 L1058,278 L1020,288 L1000,294Z" />
          <path d="M1070,237 L1085,228 L1120,228 L1133,215 L1130,230 L1105,241 L1080,238Z" />
        </g>
        <g fill="none" stroke="#666" strokeWidth="4">
          <path d="M122,64l10 14-6 12 8 6-4 14 6 8M130,75l8 18-2 14 6 10" strokeWidth="5" />
          <path d="M138,388l16-2M142,396h12M180,496l8-4 12 5M200,516l3 2M222,512l3 4M222,524l4-2" />
          <path d="M1132,350l-4 14 8 14-6 10 8 16M1143,346l2 18 8 12-4 18M1124,436l12 4-8 14 16 8-14 6 18 4M1118,470l14 8M1114,360l8 18-4 10" />
          <path d="M1018,575l3 40M1014,598l6-6M884,590l10-8 8 10M850,588l8 10-10 6 10 8M1014,730l10-4M674,640l8-10 10 4M725,610l6-6" />
          <path d="M1258,290l10-2M1266,276l-2-14M1250,298h14M1255,280l14 6" />
        </g>
        <g fontSize="44" letterSpacing="2.500" fill="#a2c9bf" fillOpacity="0.85">
          <text x="570" y="301">United</text>
          <text x="572" y="363">States</text>
        </g>
        <rect x="30" y="700" width="353" height="54" fill="#fff" fillOpacity="0.6" />
        <text x="35" y="744" textLength="341" lengthAdjust="spacingAndGlyphs" className="fill-[#555] font-['Liberation_Sans',sans-serif] text-[42px]">© Mapbox © OSM</text>
      </g>
      <rect x="14" y="17" width="1396" height="749" fill="none" stroke="#e4e4e4" strokeWidth="4" />
    </svg>
  );
}

function RegionPanel() {
  return (
    <div className="relative mt-2 h-[362px] w-[492px]">
      <div className="size-full rounded-[3px] border-4 border-[#666] bg-white">
        <h2 className="h-[89px] pl-[16px] text-[40px] leading-[90px]">Sales by Region</h2>
        <RegionMap />
      </div>
      <div className="absolute -top-[22px] left-[196px] flex h-[24px] w-[100px] flex-col gap-[6px] rounded-t-[5px] bg-[#666] px-[9px] pt-[5px]">
        <div className="h-[2px] bg-white" />
        <div className="h-[2px] bg-white" />
      </div>
      <div className="absolute left-[488px] top-0 z-10 h-[210px] w-[42px] rounded-[4px] rounded-tl-none bg-[#666]">
        <svg width="42" height="210" viewBox="0 0 42 210" fill="none" stroke="#fff" strokeWidth="2.400">
          <path d="m11 11 20 20M31 11 11 31" />
          <path d="M18 54H9.500v18H27V62" strokeWidth="2" />
          <path d="M15.500 66 28 53" strokeWidth="3" />
          <path d="M21.500 48H32v11z" fill="#fff" stroke="none" />
          <path d="M8.500 92h25v3l-9.500 11v11l-6 2v-13L8.500 95z" fill="#fff" stroke="none" />
          <path d="M13 134h16M16 134v12l-3 4.500h16l-3-4.500v-12M21 151v9.500" strokeWidth="2" />
          <path d="M13.500 184h15L21 192.500z" fill="#fff" stroke="none" />
        </svg>
      </div>
      <svg width="180" height="190" viewBox="1540 830 180 190" className="absolute -top-[82px] left-[328px] z-20">
        <path d="M1549 847 1557 841 1672.500 970 1687 957.500 1702.500 1010.500 1650 990.500 1665 977.500Z" fill="#eb4526" />
      </svg>
    </div>
  );
}

function Dashboard() {
  return (
    <main className="w-[1300px] shrink-0 bg-white font-['Noto_Sans',sans-serif] font-normal text-[#3a3a3a]">
      <h1 className="h-[114px] whitespace-nowrap pl-[29px] text-[48px] leading-[116px] tracking-[0.12px]">Superstore Sales Dashboard</h1>
      <div className="flex">
        <div className="w-[796px]">
          <h2 className="h-[60px] pl-[32px] text-[40px] leading-[62px] tracking-[0.15px]">Sales by Category</h2>
          <CategoryChart />
          <h2 className="h-[60px] pl-[32px] text-[40px] leading-[61px] tracking-[-0.05px]">Sales Over Time</h2>
          <TimeChart />
        </div>
        <div className="w-[504px]">
          <h3 className="h-[30px] pl-[12px] text-[24px] font-semibold leading-[22px] tracking-[-0.45px] text-[#333]">Sub-Category</h3>
          <ul>
            {SUBCATEGORIES.map(([name, color]) => (
              <li key={name} className="flex h-[40px] items-center gap-[10px] pl-[18px] text-[24px] leading-[40px] tracking-[0.15px]">
                <span className="size-[28px]" style={{ backgroundColor: color }} />
                <span className="pt-[2px]">{name}</span>
              </li>
            ))}
          </ul>
          <RegionPanel />
          <h3 className="h-[40px] pl-[12px] text-[24px] font-semibold leading-[41px] tracking-[-0.1px] text-[#333]">Sales</h3>
          <div className="flex h-[48px] items-center pl-[20px] text-[24px] leading-[48px]">
            <span className="w-[49px] pt-[1px] tracking-[0.6px]">920</span>
            <div className="h-[34px] w-[300px] border-2 border-[#aba38f] bg-[linear-gradient(90deg,#c3e8dc_0%,#8ac4ce_26%,#48a2bb_55%,#3d84a6_74%,#345f8c_100%)]" />
            <span className="ml-[8px] pt-[1px] tracking-[0.75px]">457,688</span>
          </div>
        </div>
      </div>
    </main>
  );
}

/* ---------- sheet tabs ---------- */

function SheetTabs() {
  const tab = "flex h-full shrink-0 items-center border-r-2 border-[#c4c4c4]";
  return (
    <footer className="flex h-[60px] items-center border-t-2 border-[#c8c8c8] bg-linear-to-b from-[#e8e8e8] to-[#dedede] font-[Roboto,sans-serif] text-[24px] font-normal tracking-[0.37px] text-[#5a5a5a]">
      <div className={`${tab} w-[258px] pl-[16px]`}>
        <svg width="16" height="23" viewBox="0 0 16 23" fill="none" stroke="#666" strokeWidth="1.800">
          <ellipse cx="8" cy="4.500" rx="7" ry="3.500" />
          <path d="M1 4.500V18c0 5 14 5 14 0V4.500" />
        </svg>
        <span className="ml-[12px] tracking-[0.55px]">Data Source</span>
      </div>
      <div className={`${tab} w-[209px] pl-[13px] pt-[2px]`}>Sales by Region</div>
      <div className={`${tab} w-[212px] pl-[11px] pt-[2px]`}>Sales Over Time</div>
      <div className={`${tab} w-[234px] pl-[11px] pt-[2px]`}>Sales by Category</div>
      <div className={`${tab} w-[391px] bg-linear-to-b from-[#fcfcfc] to-[#f5f5f5] pl-[16px] font-bold`}>
        <svg width="22" height="22" viewBox="0 0 22 22" fill="none" stroke="#666" strokeWidth="1.800">
          <rect x="1" y="1" width="20" height="20" rx="1" />
          <path d="M11 1v20M1 11h20" />
        </svg>
        <span className="ml-[9px] whitespace-nowrap tracking-[0.85px]">Superstore Sales Dashboard</span>
      </div>
      <div className={`${tab} w-[63px] pl-[18px] pt-[2px]`}>
        <svg width="30" height="30" viewBox="0 0 30 30" fill="none" stroke="#666" strokeWidth="1.800">
          <path d="M14 21H2.500A1.500 1.500 0 0 1 1 19.500v-17A1.500 1.500 0 0 1 2.500 1h18A1.500 1.500 0 0 1 22 2.500V13M7 13v3M11.500 9.500V16M16 11v3" />
          <path d="M22.500 15.500v13.500M15.500 22.300h14" strokeWidth="4" />
        </svg>
      </div>
      <div className={`${tab} w-[64px] pl-[19px] pt-[2px]`}>
        <svg width="30" height="30" viewBox="0 0 30 30" fill="none" stroke="#666" strokeWidth="1.800">
          <path d="M14 21H2.500A1.500 1.500 0 0 1 1 19.500v-17A1.500 1.500 0 0 1 2.500 1h18A1.500 1.500 0 0 1 22 2.500V13M11.500 1v20M1 11h21" />
          <path d="M22.500 15.500v13.500M15.500 22.300h14" strokeWidth="4" />
        </svg>
      </div>
      <div className={`${tab} w-[64px] pl-[19px] pt-[2px]`}>
        <svg width="30" height="30" viewBox="0 0 30 30" fill="none" stroke="#666" strokeWidth="1.800">
          <path d="M22 12V1.500L11.500 5.500 1 1.500V18l10.500 4 2.500-1M11.500 5.500V22" />
          <path d="M22.500 15.500v13.500M15.500 22.300h14" strokeWidth="4" />
        </svg>
      </div>
    </footer>
  );
}

export default function App() {
  return (
    <div className="flex h-[1452px] w-[1746px] flex-col overflow-hidden bg-white">
      <Toolbar />
      <div className="flex h-[1312px] bg-[#f4f4f4]">
        <div className="flex bg-white">
          <Sidebar />
        </div>
        <Dashboard />
      </div>
      <SheetTabs />
    </div>
  );
}
